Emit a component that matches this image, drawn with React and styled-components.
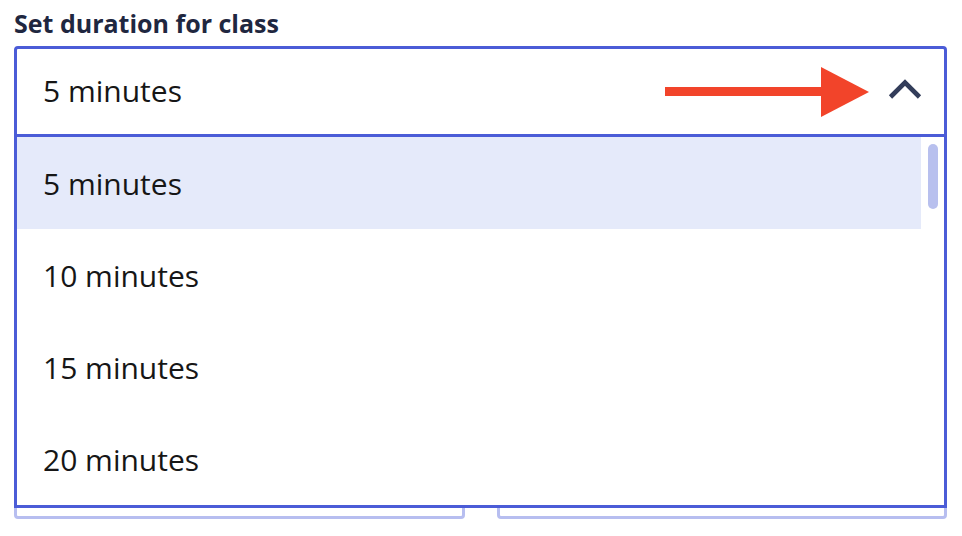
import React, { useState } from 'react';
import styled, { createGlobalStyle } from 'styled-components';

const GlobalStyle = createGlobalStyle`
  body {
    margin: 0;
    background: #ffffff;
    font-family: "Open Sans", "Noto Sans", sans-serif;
  }
`;

const Page = styled.div`
  width: 933px;
  padding: 7px 0 0 14px;
`;

const Label = styled.div`
  font-size: 25px;
  line-height: 33px;
  font-weight: 700;
  color: #1f2740;
  margin-bottom: 6px;
`;

const SelectWrap = styled.div`
  position: relative;
  z-index: 2;
`;

const SelectHeader = styled.div`
  height: 85px;
  border: 3px solid #4b5cd7;
  border-radius: 4px 4px 0 0;
  display: flex;
  align-items: center;
  padding: 0 22px 0 26px;
  gap: 19px;
  font-size: 30px;
  color: #161616;
`;

const Value = styled.span`
  flex: 1;
  margin-bottom: 3px;
`;

const Chevron = styled.svg`
  width: 34px;
  height: 21px;
  margin-bottom: 5px;
`;

const Menu = styled.ul`
  position: absolute;
  top: 100%;
  left: 0;
  right: 0;
  margin: 0;
  padding: 0 23px 0 0;
  list-style: none;
  height: 368px;
  overflow: hidden;
  background: #ffffff;
  border: 3px solid #4b5cd7;
  border-top: none;
`;

const Thumb = styled.div`
  position: absolute;
  top: 7px;
  right: 6px;
  width: 10px;
  height: 65px;
  border-radius: 5px;
  background: #b8c0ee;
`;

const Option = styled.li`
  height: 92px;
  display: flex;
  align-items: center;
  padding-left: 26px;
  font-size: 30px;
  color: #161616;
  background: ${(p) => (p.$active ? '#e5eafa' : '#ffffff')};
  cursor: pointer;
`;

const FieldRow = styled.div`
  display: grid;
  grid-template-columns: 1fr 1fr;
  gap: 32px;
  margin-top: 8px;
`;

const Field = styled.div`
  height: 368px;
  border: 3px solid #b7bef0;
  border-radius: 4px;
`;

const options = [5, 10, 15, 20];

function Arrow() {
  return (
    <svg width="204" height="50" viewBox="0 0 204 50">
      <rect x="0" y="20" width="158" height="9" fill="#f2442a" />
      <polygon points="156,0 204,25 156,50" fill="#f2442a" />
    </svg>
  );
}

export default function App() {
  const [value, setValue] = useState(5);
  return (
    <>
      <GlobalStyle />
      <Page>
        <Label>Set duration for class</Label>
        <SelectWrap>
          <SelectHeader>
            <Value>{value} minutes</Value>
            <Arrow />
            <Chevron viewBox="0 0 34 21">
              <polyline
                points="2.5,18 17,3.5 31.5,18"
                fill="none"
                stroke="#333d5a"
                strokeWidth="4.6"
              />
            </Chevron>
          </SelectHeader>
          <Menu>
            {options.map((m) => (
              <Option key={m} $active={m === value} onClick={() => setValue(m)}>
                {m} minutes
              </Option>
            ))}
            <Thumb />
          </Menu>
        </SelectWrap>
        <FieldRow>
          <Field />
          <Field />
        </FieldRow>
      </Page>
    </>
  );
}
